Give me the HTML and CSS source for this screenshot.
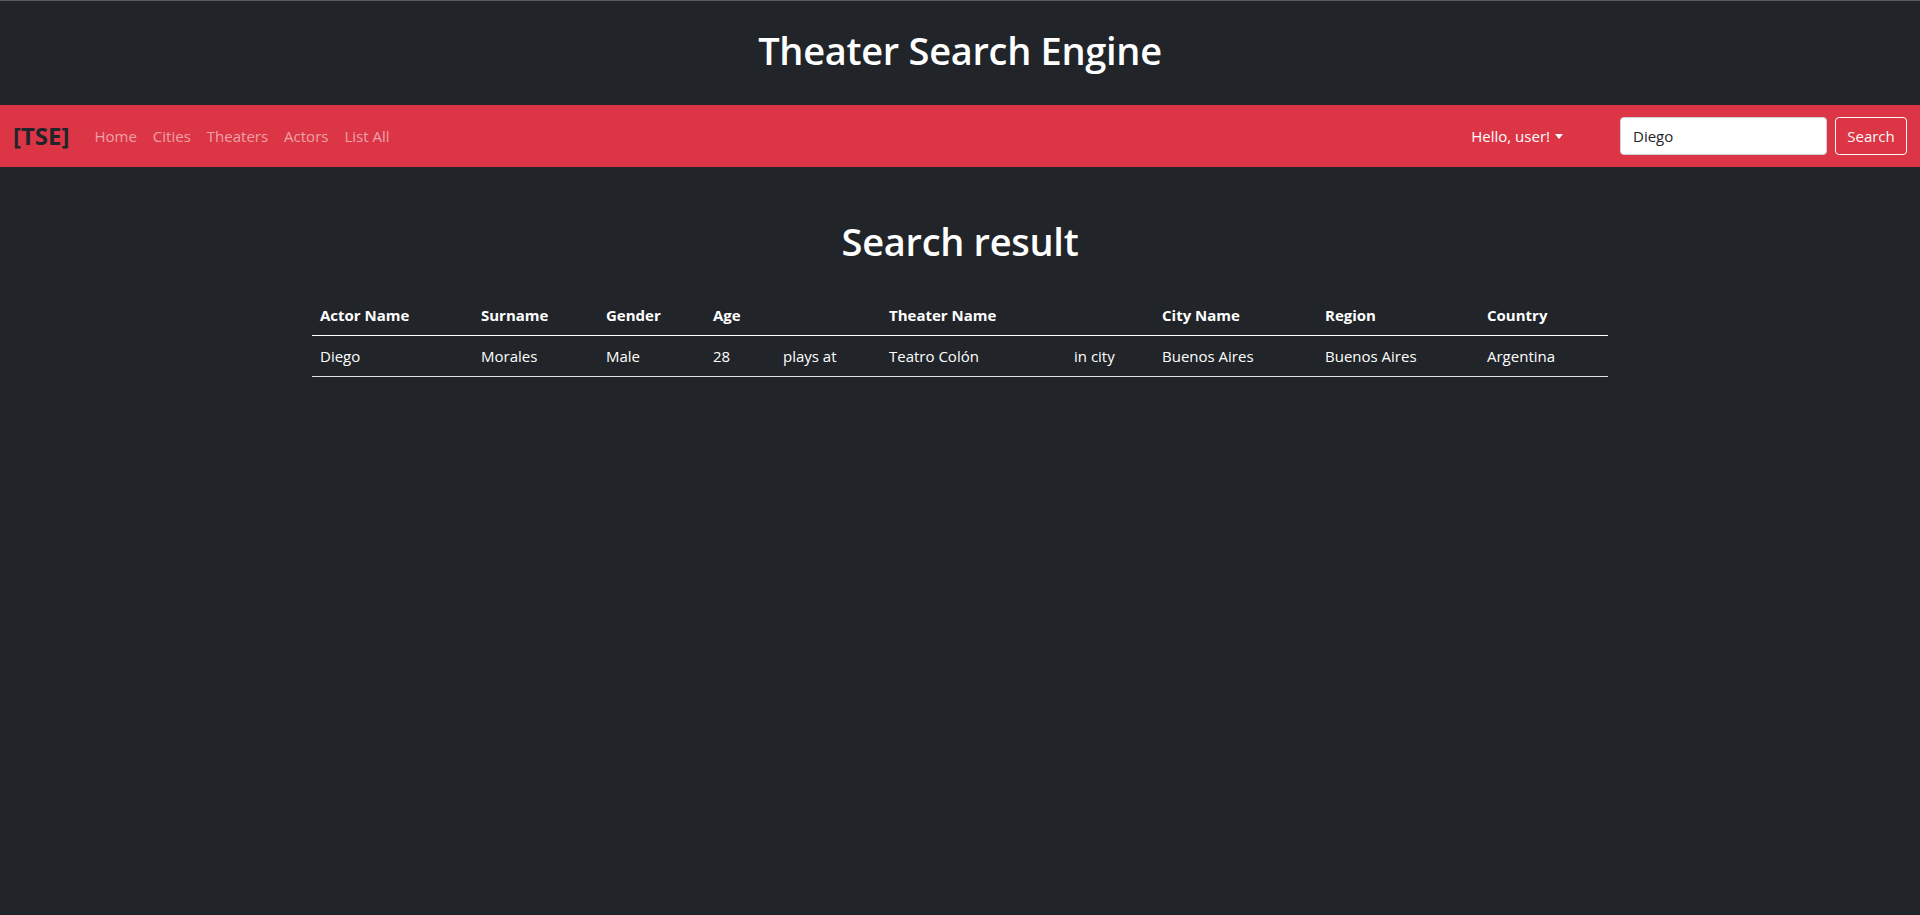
FILE: index.html
```html
<!DOCTYPE html>
<html lang="en">
<head>
<meta charset="utf-8">
<title>Theater Search Engine</title>
<link rel="stylesheet" href="styles.css">
</head>
<body>
<header class="site-header">
  <h1 class="site-title">Theater Search Engine</h1>
</header>
<nav class="navbar">
  <a class="brand" href="#">[TSE]</a>
  <ul class="nav-links">
    <li><a class="nav-link" href="#">Home</a></li>
    <li><a class="nav-link" href="#">Cities</a></li>
    <li><a class="nav-link" href="#">Theaters</a></li>
    <li><a class="nav-link" href="#">Actors</a></li>
    <li><a class="nav-link" href="#">List All</a></li>
  </ul>
  <div class="nav-right">
    <a class="user-menu" href="#">Hello, user!<span class="caret"></span></a>
    <form class="search-form">
      <input class="search-input" type="text" value="Diego">
      <button class="search-btn" type="button">Search</button>
    </form>
  </div>
</nav>
<main class="content">
  <h1 class="page-title">Search result</h1>
  <table class="results">
    <colgroup>
      <col class="c-actor"><col class="c-surname"><col class="c-gender"><col class="c-age"><col class="c-plays">
      <col class="c-theater"><col class="c-incity"><col class="c-city"><col class="c-region"><col class="c-country">
    </colgroup>
    <thead>
      <tr>
        <th>Actor Name</th><th>Surname</th><th>Gender</th><th>Age</th><th></th>
        <th>Theater Name</th><th></th><th>City Name</th><th>Region</th><th>Country</th>
      </tr>
    </thead>
    <tbody>
      <tr>
        <td>Diego</td><td>Morales</td><td>Male</td><td>28</td><td>plays at</td>
        <td>Teatro Colón</td><td>in city</td><td>Buenos Aires</td><td>Buenos Aires</td><td>Argentina</td>
      </tr>
    </tbody>
  </table>
</main>
</body>
</html>
```

FILE: styles.css
```css
* { box-sizing: border-box; }

html, body {
  margin: 0;
  padding: 0;
}

body {
  background: #212529;
  color: #fff;
  font-family: "Open Sans", "Noto Sans", "Liberation Sans", sans-serif;
  font-size: 16px;
  line-height: 1.5;
  border-top: 1px solid #5a5b5d;
  min-height: 915px;
}

.site-header {
  padding: 25px 0 31px;
  text-align: center;
}

.site-title,
.page-title {
  margin: 0;
  font-size: 38px;
  font-weight: 600;
  line-height: 48px;
  letter-spacing: -0.3px;
  text-align: center;
}

.navbar {
  display: flex;
  align-items: center;
  height: 62px;
  padding: 0 13px 0 13px;
  background: #dc3545;
}

.brand {
  color: #212529;
  font-size: 24px;
  font-weight: 700;
  line-height: 30px;
  text-decoration: none;
  margin-right: 17px;
}

.nav-links {
  display: flex;
  list-style: none;
  margin: 0;
  padding: 0;
}

.nav-link {
  display: block;
  padding: 8px 8px;
  color: rgba(255, 255, 255, 0.55);
  text-decoration: none;
  font-size: 15px;
}

.nav-right {
  margin-left: auto;
  display: flex;
  align-items: center;
}

.user-menu {
  display: flex;
  align-items: center;
  color: #fff;
  text-decoration: none;
  font-size: 15px;
  margin-right: 57px;
}

.caret {
  display: inline-block;
  margin-left: 5px;
  border-top: 5px solid #fff;
  border-left: 4.5px solid transparent;
  border-right: 4.5px solid transparent;
}

.search-form {
  display: flex;
  align-items: center;
  gap: 8px;
}

.search-input {
  width: 207px;
  height: 38px;
  padding: 6px 12px;
  border: 1px solid #ced4da;
  border-radius: 4px;
  background: #fff;
  color: #212529;
  font-family: inherit;
  font-size: 15px;
}

.search-btn {
  width: 72px;
  height: 38px;
  padding: 0;
  border: 1px solid #f8f9fa;
  border-radius: 4px;
  background: transparent;
  color: #f8f9fa;
  font-family: inherit;
  font-size: 15px;
}

.content {
  padding-top: 50px;
}

.page-title {
  margin-bottom: 30px;
}

.results {
  width: 1296px;
  margin: 0 auto;
  border-collapse: collapse;
  table-layout: fixed;
  font-size: 15px;
}

.c-actor { width: 161px; }
.c-surname { width: 125px; }
.c-gender { width: 107px; }
.c-age { width: 70px; }
.c-plays { width: 106px; }
.c-theater { width: 185px; }
.c-incity { width: 88px; }
.c-city { width: 163px; }
.c-region { width: 162px; }
.c-country { width: 129px; }

.results th,
.results td {
  padding: 8px;
  text-align: left;
  line-height: 24px;
  white-space: nowrap;
}

.results th {
  font-weight: 700;
  border-bottom: 1px solid #ffffff;
}

.results td {
  border-bottom: 1px solid #dee2e6;
}
```
